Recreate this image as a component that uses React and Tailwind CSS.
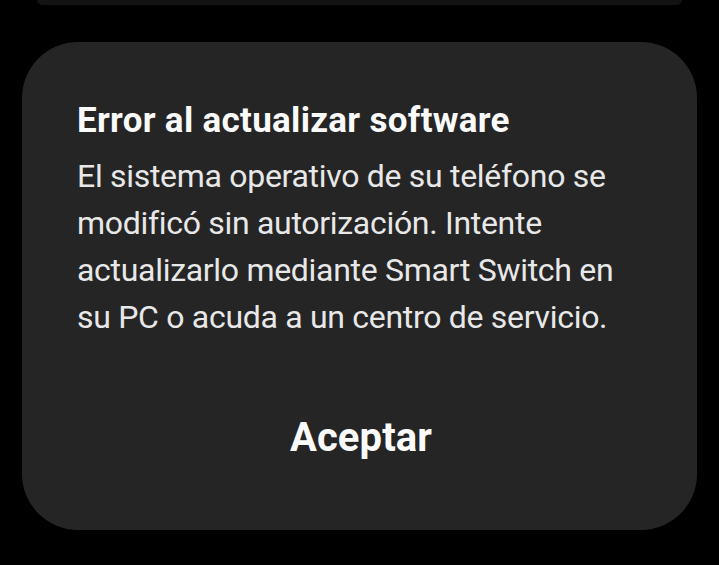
import React from 'react';

export default function App() {
  return (
    <div className="w-[719px] h-[565px] bg-black flex flex-col overflow-hidden" style={{ fontFamily: 'Roboto, "Noto Sans", sans-serif' }}>
      {/* bottom edge of the panel above */}
      <div className="h-[5px] mx-[37px] bg-[#131313] rounded-b-[6px]" />

      {/* dialog */}
      <div className="mt-[37px] mx-[22px] h-[488px] bg-[#252525] rounded-[56px] flex flex-col pt-[57px]">
        <div className="pl-[55px] pr-[60px]">
          <h1 className="text-[35px] leading-[44px] font-bold text-[#fafafa] tracking-[0.3px]">
            Error al actualizar software
          </h1>
          <p className="mt-[10px] text-[32px] leading-[47px] text-[#e8e8e8] tracking-[-0.3px]">
            El sistema operativo de su teléfono se modificó sin autorización. Intente actualizarlo mediante Smart Switch en su PC o acuda a un centro de servicio.
          </p>
        </div>
        <div className="mt-auto mb-[68px] flex justify-center pl-[3px]">
          <button className="text-[40px] leading-[48px] font-bold text-[#fafafa] tracking-[0.1px]">
            Aceptar
          </button>
        </div>
      </div>
    </div>
  );
}
